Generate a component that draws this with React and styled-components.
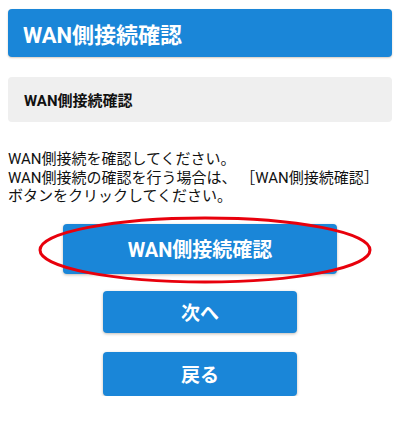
import React from 'react';
import styled, { createGlobalStyle } from 'styled-components';

const GlobalStyle = createGlobalStyle`
  body {
    margin: 0;
    background: #ffffff;
    font-family: Roboto, "Noto Sans CJK JP", sans-serif;
    color: #111;
  }
`;

const Page = styled.div`
  padding: 9px 8px 0;
  display: flex;
  flex-direction: column;
`;

const Header = styled.h1`
  margin: 0;
  height: 48px;
  display: flex;
  align-items: center;
  padding: 0 15px;
  background: #1a86d8;
  border-radius: 4px;
  box-shadow: 0 1px 2px rgba(120, 80, 40, 0.3);
  color: #fff;
  font-size: 22px;
  font-weight: 700;
`;

const SubTitle = styled.h2`
  margin: 20px 0 0;
  height: 45px;
  display: flex;
  align-items: center;
  padding: 0 16px;
  background: #efefef;
  border-radius: 4px;
  font-size: 15px;
  font-weight: 700;
  color: #111;
`;

const Text = styled.p`
  margin: 28px 0 0;
  font-size: 15px;
  line-height: 18.5px;
  color: #111;
`;

const Buttons = styled.div`
  display: flex;
  flex-direction: column;
  align-items: center;
  gap: 19px;
  margin-top: 18px;
`;

const Mark = styled.div`
  position: relative;
  margin-bottom: -2px;
`;

const Ring = styled.svg`
  position: absolute;
  left: -28px;
  top: -9px;
  width: 340px;
  height: 70px;
  pointer-events: none;
`;

const Button = styled.button`
  width: ${p => p.$width}px;
  height: ${p => p.$height}px;
  border: none;
  border-radius: 4px;
  background: #1a86d8;
  box-shadow: 0 1px 3px rgba(80, 60, 40, 0.35);
  color: #fff;
  font-family: Roboto, "Noto Sans CJK JP", sans-serif;
  font-size: ${p => p.$size}px;
  font-weight: 700;
  cursor: pointer;
`;

export default function App() {
  return (
    <>
      <GlobalStyle />
      <Page>
        <Header>WAN側接続確認</Header>
        <SubTitle>WAN側接続確認</SubTitle>
        <Text>
          WAN側接続を確認してください。<br />
          WAN側接続の確認を行う場合は、 ［WAN側接続確認］<br />
          ボタンをクリックしてください。
        </Text>
        <Buttons>
          <Mark>
            <Button $width={274} $height={50} $size={20}>WAN側接続確認</Button>
            <Ring viewBox="0 0 340 70">
              <ellipse cx="170" cy="35" rx="165" ry="32" fill="none" stroke="#e8000c" strokeWidth="3" />
            </Ring>
          </Mark>
          <Button $width={194} $height={42} $size={19}>次へ</Button>
          <Button $width={194} $height={44} $size={19}>戻る</Button>
        </Buttons>
      </Page>
    </>
  );
}
